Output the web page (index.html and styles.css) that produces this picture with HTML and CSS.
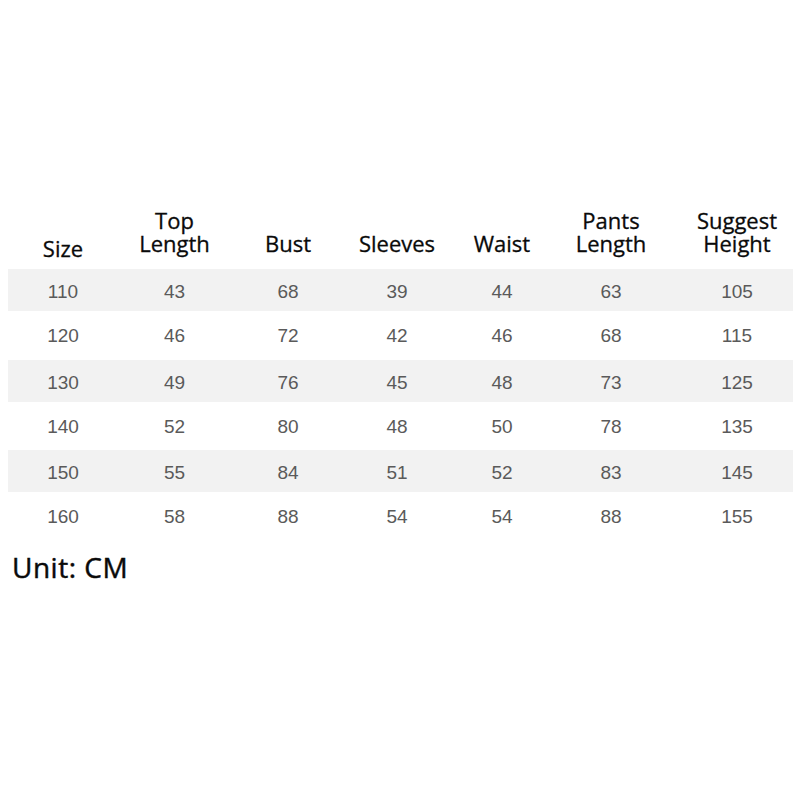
FILE: index.html
```html
<!DOCTYPE html>
<html>
<head>
<meta charset="utf-8">
<link rel="stylesheet" href="styles.css">
</head>
<body>
<div class="page">
  <div class="chart">
    <div class="row head">
      <div class="cell size">Size</div>
      <div class="cell">Top<br>Length</div>
      <div class="cell">Bust</div>
      <div class="cell">Sleeves</div>
      <div class="cell">Waist</div>
      <div class="cell">Pants<br>Length</div>
      <div class="cell last">Suggest<br>Height</div>
    </div>
    <div class="row data gray"><div class="cell">110</div><div class="cell">43</div><div class="cell">68</div><div class="cell">39</div><div class="cell">44</div><div class="cell">63</div><div class="cell last">105</div></div>
    <div class="row data"><div class="cell">120</div><div class="cell">46</div><div class="cell">72</div><div class="cell">42</div><div class="cell">46</div><div class="cell">68</div><div class="cell last">115</div></div>
    <div class="row data gray"><div class="cell">130</div><div class="cell">49</div><div class="cell">76</div><div class="cell">45</div><div class="cell">48</div><div class="cell">73</div><div class="cell last">125</div></div>
    <div class="row data"><div class="cell">140</div><div class="cell">52</div><div class="cell">80</div><div class="cell">48</div><div class="cell">50</div><div class="cell">78</div><div class="cell last">135</div></div>
    <div class="row data gray"><div class="cell">150</div><div class="cell">55</div><div class="cell">84</div><div class="cell">51</div><div class="cell">52</div><div class="cell">83</div><div class="cell last">145</div></div>
    <div class="row data"><div class="cell">160</div><div class="cell">58</div><div class="cell">88</div><div class="cell">54</div><div class="cell">54</div><div class="cell">88</div><div class="cell last">155</div></div>
  </div>
  <div class="unit">Unit: CM</div>
</div>
</body>
</html>
```
FILE: styles.css
```css
html, body {
  margin: 0;
  padding: 0;
  background: #ffffff;
}
.page {
  width: 800px;
  height: 800px;
  padding-top: 200px;
  box-sizing: border-box;
}
.chart {
  margin-left: 8px;
  width: 785px;
}
.row {
  display: grid;
  grid-template-columns: 110px 113px 114px 104px 106px 112px 126px;
}
.head {
  height: 69px;
  align-items: end;
  font-family: "Open Sans", "Noto Sans", sans-serif;
  font-weight: 400;
  font-size: 22px;
  line-height: 23px;
  color: #0a0a0a;
  -webkit-text-stroke: 0.3px #0a0a0a;
}
.head .cell {
  padding-bottom: 14px;
}
.head .size {
  padding-bottom: 9px;
}
.cell {
  text-align: center;
}
.cell.last {
  padding-left: 14px;
}
.data {
  height: 48.5px;
  align-items: center;
  font-family: "Liberation Sans", Arial, sans-serif;
  font-size: 19px;
  color: #5a5a5a;
  box-sizing: border-box;
  padding-top: 2px;
}
.data.gray {
  background: #f2f2f2;
  height: 42px;
  padding-top: 4px;
}
.unit {
  margin-left: 12px;
  margin-top: 8.5px;
  font-family: "Open Sans", "Noto Sans", sans-serif;
  font-weight: 400;
  font-size: 28px;
  line-height: 36px;
  letter-spacing: 0.5px;
  color: #0a0a0a;
  -webkit-text-stroke: 0.45px #0a0a0a;
}
```
